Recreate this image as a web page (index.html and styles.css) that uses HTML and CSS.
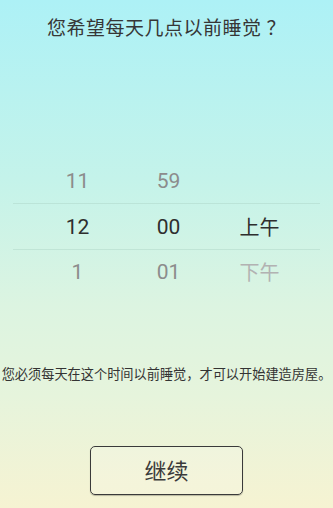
FILE: index.html
```html
<!DOCTYPE html>
<html lang="zh">
<head>
<meta charset="utf-8">
<title>睡觉时间</title>
<link rel="stylesheet" href="styles.css">
</head>
<body>
<div class="screen">
  <h1 class="title">您希望每天几点以前睡觉<span class="qmark">？</span></h1>
  <div class="picker">
    <div class="row">
      <span class="cell dim">11</span>
      <span class="cell dim">59</span>
      <span class="cell"></span>
    </div>
    <div class="row selected">
      <span class="cell">12</span>
      <span class="cell">00</span>
      <span class="cell cjk">上午</span>
    </div>
    <div class="row">
      <span class="cell dim">1</span>
      <span class="cell dim">01</span>
      <span class="cell cjk faint">下午</span>
    </div>
  </div>
  <p class="note">您必须每天在这个时间以前睡觉，才可以开始建造房屋。</p>
  <button class="continue" type="button">继续</button>
</div>
</body>
</html>
```
FILE: styles.css
```css
html, body {
  margin: 0;
  padding: 0;
}
body {
  width: 333px;
  height: 508px;
  overflow: hidden;
  font-family: Roboto, "Noto Sans CJK SC", sans-serif;
}
.screen {
  height: 508px;
  display: flex;
  flex-direction: column;
  align-items: center;
  background: linear-gradient(180deg, #adf1f6 0%, #c4f3ea 35%, #dcf4e1 60%, #e6f4dc 78%, #f6f3d2 100%);
  overflow: hidden;
}
.title {
  margin: 15px 0 0;
  font-family: "Noto Sans CJK SC", sans-serif;
  font-weight: 400;
  font-size: 19px;
  line-height: 24px;
  color: #363636;
  letter-spacing: 0.5px;
}
.qmark {
  margin-left: 5px;
}
.picker {
  margin-top: 120px;
  width: 307px;
  display: flex;
  flex-direction: column;
}
.row {
  height: 44px;
  display: grid;
  grid-template-columns: 91px 91px 91px;
  padding-left: 19px;
  align-items: center;
}
.row.selected {
  height: 45px;
  border-top: 1px solid rgba(160, 200, 185, 0.35);
  border-bottom: 1px solid rgba(160, 200, 185, 0.35);
}
.cell {
  text-align: center;
  font-size: 21px;
  line-height: 26px;
  color: #2e2e2e;
}
.cell.cjk {
  font-family: "Noto Sans CJK SC", sans-serif;
  font-size: 20px;
}
.cell.dim {
  color: #8c8c8c;
}
.cell.faint {
  color: #b2b2b2;
}
.note {
  margin: 70px 0 0;
  font-family: "Noto Sans CJK SC", sans-serif;
  font-size: 13.2px;
  line-height: 20px;
  color: #333;
  white-space: nowrap;
}
.continue {
  margin-top: 62px;
  width: 153px;
  height: 49px;
  border: 1.5px solid #3a3a3a;
  border-radius: 5px;
  background: rgba(255, 255, 255, 0.15);
  box-shadow: 0 1px 1px rgba(0, 0, 0, 0.25);
  font-family: "Noto Sans CJK SC", sans-serif;
  font-size: 22px;
  line-height: 26px;
  color: #3a3a3a;
  padding: 0 0 3px;
}
```
